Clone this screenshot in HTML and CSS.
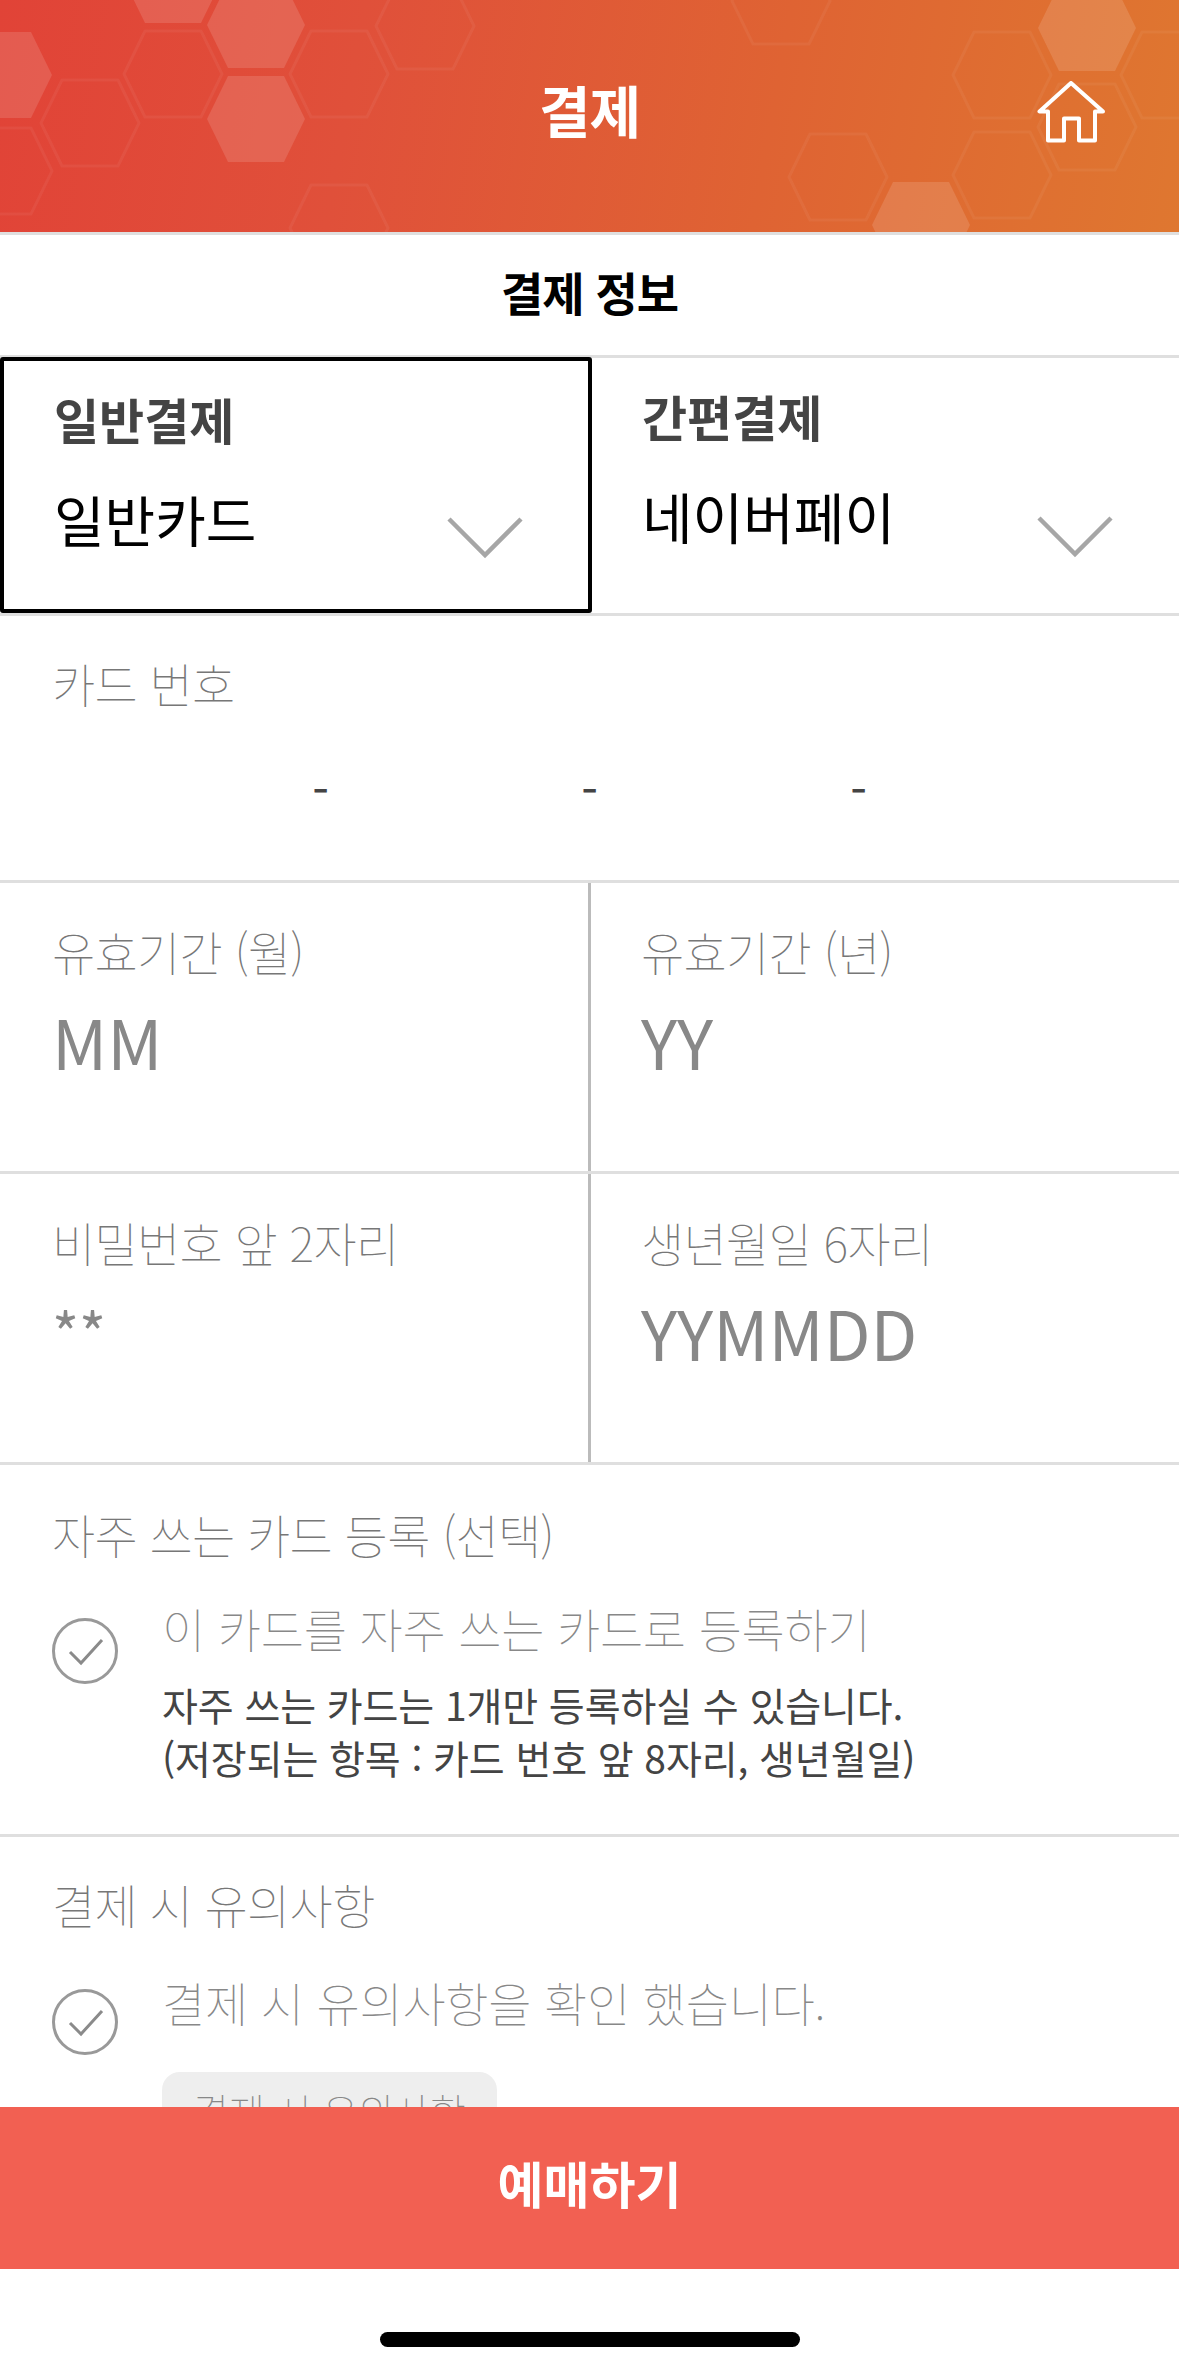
FILE: index.html
```html
<!DOCTYPE html>
<html lang="ko">
<head>
<meta charset="utf-8">
<title>결제</title>
<link rel="stylesheet" href="styles.css">
</head>
<body>
<div class="page">
  <header class="top">
    <svg class="pattern" width="1179" height="232" viewBox="0 0 1179 232" aria-hidden="true">
      <defs>
        <polygon id="hx" points="49,0 28,-43 -28,-43 -49,0 -28,43 28,43"/>
      </defs>
      <g class="hex-fill">
        <use href="#hx" x="3" y="75" class="tint-a"/>
        <use href="#hx" x="173" y="-20"/>
        <use href="#hx" x="256" y="25"/>
        <use href="#hx" x="256" y="119"/>
        <use href="#hx" x="1087" y="28"/>
        <use href="#hx" x="921" y="225"/>
      </g>
      <g class="hex-line">
        <use href="#hx" x="173" y="74"/>
        <use href="#hx" x="90" y="123"/>
        <use href="#hx" x="3" y="171"/>
        <use href="#hx" x="339" y="74"/>
        <use href="#hx" x="339" y="228"/>
        <use href="#hx" x="425" y="26"/>
        <use href="#hx" x="781" y="1"/>
        <use href="#hx" x="1002" y="75"/>
        <use href="#hx" x="1170" y="75"/>
        <use href="#hx" x="1087" y="127"/>
        <use href="#hx" x="838" y="177"/>
        <use href="#hx" x="1002" y="175"/>
      </g>
    </svg>
    <h1 class="top-title">결제</h1>
    <svg class="home" width="70" height="64" viewBox="0 0 70 64" aria-hidden="true">
      <path d="M35 2 3.5 30.5H12V59.500H28V37.500H43V59.500H59V30.500H67Z"/>
    </svg>
  </header>

  <main class="scroll">
    <h2 class="sub-title">결제 정보</h2>

    <div class="tabs">
      <div class="tab tab-active">
        <div class="tab-label">일반결제</div>
        <div class="tab-value">일반카드</div>
        <svg class="chev" width="78" height="42" viewBox="0 0 78 42" aria-hidden="true"><path d="M3 2 39 38 75 2"/></svg>
      </div>
      <div class="tab tab-plain">
        <div class="tab-label">간편결제</div>
        <div class="tab-value">네이버페이</div>
        <svg class="chev" width="78" height="42" viewBox="0 0 78 42" aria-hidden="true"><path d="M3 2 39 38 75 2"/></svg>
      </div>
    </div>

    <section class="field field-card">
      <div class="label">카드 번호</div>
      <div class="dashes"><span>-</span><span>-</span><span>-</span></div>
    </section>

    <div class="pair">
      <section class="field cell">
        <div class="label">유효기간 (월)</div>
        <div class="hint">MM</div>
      </section>
      <section class="field cell cell-right">
        <div class="label">유효기간 (년)</div>
        <div class="hint">YY</div>
      </section>
    </div>

    <div class="pair">
      <section class="field cell">
        <div class="label">비밀번호 앞 2자리</div>
        <div class="hint hint-stars">**</div>
      </section>
      <section class="field cell cell-right">
        <div class="label">생년월일 6자리</div>
        <div class="hint">YYMMDD</div>
      </section>
    </div>

    <section class="block block-card">
      <div class="label">자주 쓰는 카드 등록 (선택)</div>
      <div class="check-row">
        <svg class="check" width="66" height="66" viewBox="0 0 66 66" aria-hidden="true">
          <circle cx="33" cy="33" r="31.500"/>
          <path d="M18 34 29 45 50 22"/>
        </svg>
        <div class="check-body">
          <div class="check-text">이 카드를 자주 쓰는 카드로 등록하기</div>
          <p class="note">자주 쓰는 카드는 1개만 등록하실 수 있습니다.<br>(저장되는 항목 : 카드 번호 앞 8자리, 생년월일)</p>
        </div>
      </div>
    </section>

    <section class="block block-notice">
      <div class="label">결제 시 유의사항</div>
      <div class="check-row">
        <svg class="check" width="66" height="66" viewBox="0 0 66 66" aria-hidden="true">
          <circle cx="33" cy="33" r="31.500"/>
          <path d="M18 34 29 45 50 22"/>
        </svg>
        <div class="check-body">
          <div class="check-text">결제 시 유의사항을 확인 했습니다.</div>
          <div class="chip">결제 시 유의사항</div>
        </div>
      </div>
    </section>
  </main>

  <button class="buy" type="button">예매하기</button>
  <footer class="foot"><span class="indicator"></span></footer>
</div>
</body>
</html>
```
FILE: styles.css
```css
* { box-sizing: border-box; }
html, body { margin: 0; padding: 0; background: #fff; }
body { font-family: "Noto Sans CJK KR", "Noto Sans", sans-serif; color: #000; }

.page { width: 1179px; height: 2371px; display: flex; flex-direction: column; overflow: hidden; }

/* header */
.top {
  position: relative;
  flex: none;
  height: 235px;
  border-bottom: 3px solid #dfdfdf;
  background: linear-gradient(100deg, #e14337 0%, #e0503a 30%, #df6333 65%, #df7730 100%);
  display: flex;
  align-items: center;
  justify-content: center;
  padding-bottom: 14px;
}
.pattern { position: absolute; left: 0; top: 0; }
.hex-fill use { fill: #fff; fill-opacity: .13; }
.hex-line use { fill: none; stroke: #fff; stroke-opacity: .05; stroke-width: 3; stroke-linejoin: round; }
.top-title { position: relative; margin: 0; font-size: 56px; line-height: 60px; font-weight: 700; color: #fff; letter-spacing: -1px; }
.home { position: absolute; left: 1036px; top: 81px; }
.home path { fill: none; stroke: #fff; stroke-width: 4; stroke-linejoin: round; stroke-linecap: round; }

/* scrolling content */
.scroll { flex: 1 1 0; min-height: 0; overflow: hidden; }
.sub-title {
  margin: 0; height: 123px; border-bottom: 3px solid #dfdfdf;
  display: flex; align-items: center; justify-content: center;
  padding-bottom: 8px;
  font-size: 46px; font-weight: 700; letter-spacing: -1px; color: #000;
}

.tabs { display: grid; grid-template-columns: 592px 1fr; height: 258px; border-bottom: 3px solid #dfdfdf; }
.tab { position: relative; }
.tab-active { border: 4px solid #000; border-radius: 3px; margin-top: -1px; padding: 23px 0 0 50px; height: 256px; }
.tab-plain { padding: 23px 0 0 50px; }
.tab-label { font-size: 49px; line-height: 70px; font-weight: 700; color: #444; letter-spacing: 0; }
.tab-value { margin-top: 25px; font-size: 55px; line-height: 78px; font-weight: 400; color: #000; }
.chev { position: absolute; top: 158px; right: 65px; }
.tab-active .chev { right: 64px; top: 156px; }
.chev path { fill: none; stroke: #a6a6a6; stroke-width: 4.500; }

/* fields */
.field { padding: 34px 0 0 52px; }
.label { font-size: 47px; line-height: 66px; font-weight: 100; color: #777; letter-spacing: -.7px; }
.field-card { height: 267px; border-bottom: 3px solid #dfdfdf; }
.dashes { margin: 37px 0 0 -52px; display: flex; justify-content: center; gap: 240px; font-size: 48px; line-height: 70px; color: #444; }
.dashes span { width: 29px; text-align: center; }

.pair { display: grid; grid-template-columns: 590px 1fr; height: 291px; border-bottom: 3px solid #dfdfdf; }
.cell { padding-top: 35px; }
.cell-right { border-left: 3px solid #bbb; padding-left: 50px; margin-left: -2px; }
.hint { margin-top: 13px; font-size: 68px; line-height: 88px; font-weight: 400; color: #888; }
.hint-stars { line-height: 60px; font-size: 58px; margin-top: 26px; }

.block { padding: 36px 0 0 52px; }
.block-card { height: 372px; border-bottom: 3px solid #dfdfdf; }
.check-row { display: flex; gap: 44px; margin-top: 28px; }
.check { flex: none; margin-top: 23px; }
.check circle { fill: none; stroke: #999; stroke-width: 3; }
.check path { fill: none; stroke: #8a8a8a; stroke-width: 3; }
.check-text { font-size: 47px; line-height: 66px; font-weight: 100; color: #888; letter-spacing: -.3px; }
.note { margin: 17px 0 0; font-size: 39px; line-height: 53px; font-weight: 400; color: #444; letter-spacing: -.1px; }
.block-notice { padding-top: 34px; }
.block-notice .check-row { margin-top: 32px; }
.block-notice .check { margin-top: 20px; }
.chip {
  display: inline-block; margin-top: 37px; padding: 8px 31px; height: 90px;
  background: #eee; border-radius: 18px;
  font-size: 39px; line-height: 60px; font-weight: 100; color: #888;
}

/* bottom */
.buy {
  flex: none; display: block; width: 100%; height: 162px; border: 0; padding: 0 0 12px;
  background: #f26052; color: #fff;
  font-family: inherit; font-size: 50px; font-weight: 700;
}
.foot { flex: none; height: 102px; display: flex; justify-content: center; padding-top: 63px; }
.indicator { display: block; width: 420px; height: 15px; border-radius: 8px; background: #000; }
```
